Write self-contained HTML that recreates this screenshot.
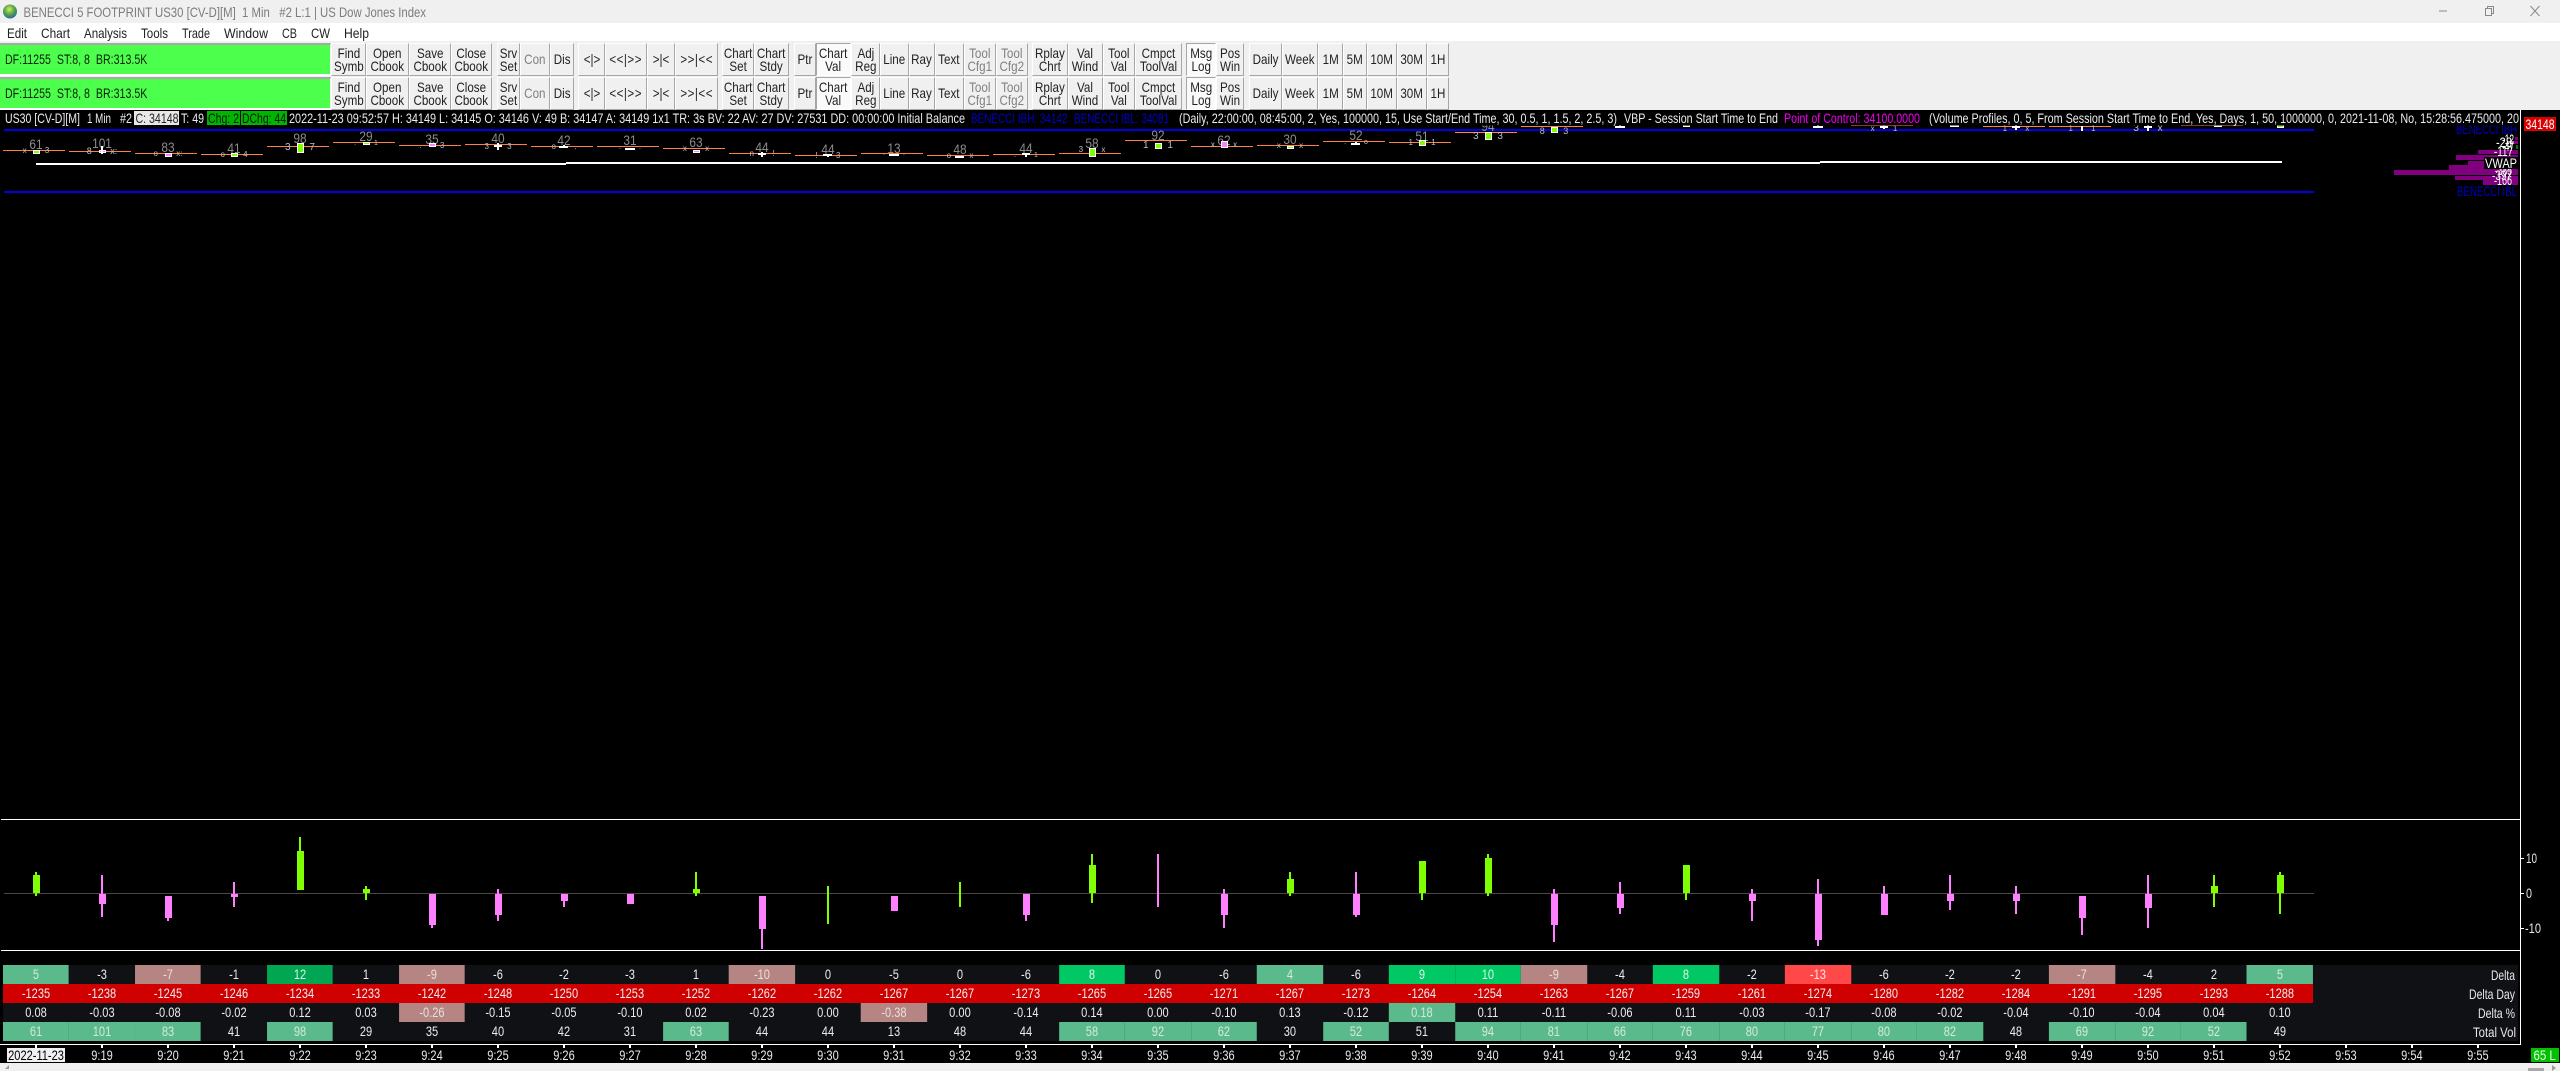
<!DOCTYPE html>
<html><head><meta charset="utf-8"><title>BENECCI 5 FOOTPRINT US30</title>
<style>
html,body{margin:0;padding:0;background:#f0f0f0}
#p{position:relative;width:2560px;height:1071px;overflow:hidden;background:#000;font-family:"Liberation Sans",sans-serif}
.a{position:absolute}
svg{position:absolute;left:0;top:0}
svg text{font-family:"Liberation Sans",sans-serif;font-size:14px;white-space:pre}
.b{position:absolute;height:33px;box-sizing:border-box;display:flex;align-items:center;justify-content:center;text-align:center;background:#f0f0f0;border:1px solid;border-color:#fff #a6a6a6 #a6a6a6 #fff;font-size:14px;line-height:13px;color:#222}
.b i{font-style:normal;display:inline-block;transform:scaleX(.83);white-space:nowrap}
.d{color:#808080}
.k{background:#fafafa;border-color:#a6a6a6 #fff #fff #a6a6a6}
.sp i{letter-spacing:.6px}
.r1{top:43px}.r2{top:77px}
.grid{position:absolute;left:3px;transform:scaleX(.82);transform-origin:0 0;display:grid;font-size:13.5px;color:#ececec;text-align:center}
.t{top:965px;grid-template-columns:repeat(35,80.488px);grid-auto-rows:19px;line-height:19px}
.x{top:1045px;grid-template-columns:repeat(38,80.488px);grid-auto-rows:18px;line-height:21px;color:#e8e8e8}
.grid b{font-weight:normal}
.s{background:#5bba8b;color:#d4e9de}
.h{background:#00a651;color:#dff2e8}
.g{background:#00c864;color:#dff5e8}
.o{background:#b48583;color:#ecdedd}
.n{background:#ff4848;color:#ffe8e8}
.lb{display:flex;align-items:center;justify-content:center;white-space:nowrap}
.lb span{display:inline-block;transform:scaleX(.82)}
</style></head><body><div id="p">
<div class="a" style="left:0;top:0;width:2560px;height:23px;background:#f0f0f0"></div>
<div class="a" style="left:0;top:23px;width:2560px;height:18px;background:#fff"></div>
<div class="a" style="left:0;top:41px;width:2560px;height:69px;background:#f0f0f0"></div>
<div class="a" style="left:0;top:1063px;width:2560px;height:8px;background:#f0f0f0"></div>

<svg width="2560" height="1071" viewBox="0 0 2560 1071">
<defs><radialGradient id="gl" cx=".45" cy=".35" r=".7"><stop offset="0" stop-color="#d8e860"/><stop offset=".5" stop-color="#5aa848"/><stop offset="1" stop-color="#1c5fa8"/></radialGradient></defs>
<circle cx="10" cy="11.5" r="7" fill="url(#gl)"/>
<text x="23.5" y="17" textLength="402.5" lengthAdjust="spacingAndGlyphs" fill="#7c7c7c">BENECCI 5 FOOTPRINT US30 [CV-D][M]  1 Min   #2 L:1 | US Dow Jones Index</text>
<path d="M2439 11h8" stroke="#8a8a8a" fill="none"/>
<path d="M2485.5 8.5h6v7h-6zM2487.5 8.5v-2h6v7h-2" stroke="#8a8a8a" fill="none"/>
<path d="M2530.5 6l9 10M2539.5 6l-9 10" stroke="#8a8a8a" fill="none"/>
<g fill="#222">
<text x="7" y="38" textLength="20" lengthAdjust="spacingAndGlyphs">Edit</text>
<text x="41" y="38" textLength="29" lengthAdjust="spacingAndGlyphs">Chart</text>
<text x="84" y="38" textLength="43" lengthAdjust="spacingAndGlyphs">Analysis</text>
<text x="141" y="38" textLength="27" lengthAdjust="spacingAndGlyphs">Tools</text>
<text x="182" y="38" textLength="28" lengthAdjust="spacingAndGlyphs">Trade</text>
<text x="224" y="38" textLength="44" lengthAdjust="spacingAndGlyphs">Window</text>
<text x="282" y="38" textLength="15" lengthAdjust="spacingAndGlyphs">CB</text>
<text x="311" y="38" textLength="19" lengthAdjust="spacingAndGlyphs">CW</text>
<text x="344" y="38" textLength="25" lengthAdjust="spacingAndGlyphs">Help</text>
</g>

<!-- footprint -->
<g shape-rendering="crispEdges">
<path fill="none" stroke="#ff8040" d="M3 150.5h62M69 151.5h62M135 153.5h62M201 154.5h62M267 146.5h62M333 142.5h62M399 145.5h62M465 144.5h62M531 146.5h62M597 146.5h62M663 148.5h62M729 153.5h62M795 155.5h62M861 153.5h62M927 155.5h62M993 154.5h62M1059 153.5h62M1125 140.5h62M1191 146.5h62M1257 145.5h62M1323 141.5h62M1389 142.5h62M1455 132.5h62M1521 126.5h62M1983 126.5h62M2049 126.5h62M1851 125.5h62M2181 125.5h62"/>
<rect x="4" y="129" width="2310" height="2" fill="#0000e0"/>
<rect x="4" y="191" width="2310" height="2" fill="#0000e0"/>
<rect x="36" y="163" width="530" height="2" fill="#fff"/>
<rect x="566" y="162" width="1254" height="2" fill="#fff"/>
<rect x="1820" y="161" width="462" height="2" fill="#fff"/>
</g>
<g fill="#8c8c8c">
<g text-anchor="middle">
<text transform="translate(36 149) scale(.85 1)">61</text>
<text transform="translate(102 148) scale(.85 1)">101</text>
<text transform="translate(168 152) scale(.85 1)">83</text>
<text transform="translate(234 153) scale(.85 1)">41</text>
<text transform="translate(300 143) scale(.85 1)">98</text>
<text transform="translate(366 141) scale(.85 1)">29</text>
<text transform="translate(432 144) scale(.85 1)">35</text>
<text transform="translate(498 143) scale(.85 1)">40</text>
<text transform="translate(564 145) scale(.85 1)">42</text>
<text transform="translate(630 145) scale(.85 1)">31</text>
<text transform="translate(696 147) scale(.85 1)">63</text>
<text transform="translate(762 152) scale(.85 1)">44</text>
<text transform="translate(828 154) scale(.85 1)">44</text>
<text transform="translate(894 153) scale(.85 1)">13</text>
<text transform="translate(960 154) scale(.85 1)">48</text>
<text transform="translate(1026 153) scale(.85 1)">44</text>
<text transform="translate(1092 148) scale(.85 1)">58</text>
<text transform="translate(1158 140) scale(.85 1)">92</text>
<text transform="translate(1224 145) scale(.85 1)">62</text>
<text transform="translate(1290 144) scale(.85 1)">30</text>
<text transform="translate(1356 140) scale(.85 1)">52</text>
<text transform="translate(1422 141) scale(.85 1)">51</text>
<text transform="translate(1488 131) scale(.85 1)">94</text>
</g></g>
<g fill="#b8c0cc" text-anchor="middle" style="word-spacing:16px">
<text style="font-size:8px" x="36" y="153">x 3</text>
<text style="font-size:9px" x="102" y="154">8 x:</text>
<text style="font-size:8px" x="168" y="156">o x:</text>
<text style="font-size:8px" x="234" y="157">o 4</text>
<text style="font-size:10px" x="300" y="150">3 7</text>
<text style="font-size:7px" x="366" y="145">. 1</text>
<text style="font-size:8px" x="432" y="148">. 3</text>
<text style="font-size:8px" x="498" y="149">3 3</text>
<text style="font-size:8px" x="564" y="149">o .</text>
<text style="font-size:7px" x="630" y="149">. .</text>
<text style="font-size:8px" x="696" y="151">x x</text>
<text style="font-size:8px" x="762" y="156">n !</text>
<text style="font-size:8px" x="828" y="158">! 3</text>
<text style="font-size:7px" x="894" y="155">. .</text>
<text style="font-size:8px" x="960" y="158">o x</text>
<text style="font-size:7px" x="1026" y="157">. 1</text>
<text style="font-size:8px" x="1092" y="152">3 x</text>
<text style="font-size:10px" x="1158" y="148">1 1</text>
<text style="font-size:8px" x="1224" y="147">x x</text>
<text style="font-size:8px" x="1290" y="148">x x</text>
<text style="font-size:7px" x="1356" y="144">. o</text>
<text style="font-size:8px" x="1422" y="145">1 1</text>
<text style="font-size:10px" x="1488" y="139">3 3</text>
<text style="font-size:9px" x="1554" y="134">8 3</text>
<text style="font-size:8px" x="1884" y="131">x 1</text>
<text style="font-size:8px" x="2016" y="131">1 x</text>
<text style="font-size:8px" x="2082" y="131">1 1</text>
<text style="font-size:10px" x="2148" y="131">3 x</text>
</g>
<g shape-rendering="crispEdges" stroke="#fff" stroke-width="1">
<g fill="#80ff00">
<rect x="33.5" y="150.5" width="6" height="3"/><rect x="231.5" y="153.5" width="6" height="3"/><rect x="297.5" y="143.5" width="6" height="9"/><rect x="363.5" y="142.5" width="6" height="2"/><rect x="1089.5" y="148.5" width="6" height="8"/><rect x="1155.5" y="143.5" width="6" height="5"/><rect x="1287.5" y="146.5" width="6" height="2"/><rect x="1419.5" y="140.5" width="6" height="5"/><rect x="1485.5" y="132.5" width="6" height="7"/><rect x="1551.5" y="127.5" width="6" height="5"/><rect x="1683.5" y="124.5" width="6" height="2"/><rect x="2277.5" y="124.5" width="6" height="3"/>
</g>
<g fill="#ff80ff">
<rect x="99.5" y="150.5" width="6" height="2"/><rect x="165.5" y="153.5" width="6" height="3"/><rect x="429.5" y="143.5" width="6" height="3"/><rect x="693.5" y="150.5" width="6" height="2"/><rect x="1221.5" y="141.5" width="6" height="6"/>
</g>
</g>
<path shape-rendering="crispEdges" fill="none" stroke="#fff" stroke-width="2" d="M102 146v8M498 143v7M494 146h8M564 145v3M559 147h9M625 149h10M762 152v5M758 154h8M828 154v3M823 155h9M889 155h10M955 157h9M1026 153v4M1022 154h8M1356 142v3M1351 144h9M1620 125v2M1615 127h10M1818 125v2M1813 127h10M1884 125v4M1880 127h8M1950 126h9M2016 125v5M2012 127h8M2082 126v5M2148 125v6M2144 127h8M2214 126h8"/>

<!-- profile -->
<g fill="#800080" shape-rendering="crispEdges">
<rect x="2515" y="137" width="3" height="3"/><rect x="2511" y="141" width="7" height="3"/><rect x="2478" y="150" width="40" height="4"/><rect x="2456" y="155" width="62" height="5"/><rect x="2468" y="161" width="50" height="4"/><rect x="2449" y="165" width="69" height="5"/><rect x="2394" y="170" width="124" height="5"/><rect x="2455" y="176" width="63" height="4"/><rect x="2483" y="180" width="35" height="5"/>
</g>
<rect x="2516" y="145" width="2" height="4" fill="#008000"/>
<g fill="#fff" text-anchor="end" style="font-size:12px">
<text x="2514" y="144" textLength="12" lengthAdjust="spacingAndGlyphs">-12</text>
<text x="2512" y="147" textLength="16" lengthAdjust="spacingAndGlyphs">-28</text>
<text x="2514" y="151" textLength="12" lengthAdjust="spacingAndGlyphs">-47</text>
<text x="2513" y="156" textLength="19" lengthAdjust="spacingAndGlyphs">-117</text>
<text x="2512" y="175" textLength="17" lengthAdjust="spacingAndGlyphs">-385</text>
<text x="2512" y="180" textLength="20" lengthAdjust="spacingAndGlyphs">-397</text>
<text x="2512" y="185" textLength="18" lengthAdjust="spacingAndGlyphs">-166</text>
</g>
<rect x="2484" y="157" width="34" height="12" fill="#000"/>
<text x="2485" y="168" textLength="32" lengthAdjust="spacingAndGlyphs" fill="#fff">VWAP</text>
<text x="2456" y="134" textLength="61" lengthAdjust="spacingAndGlyphs" fill="#0000c0">BENECCI IBH</text>
<text x="2457" y="196" textLength="60" lengthAdjust="spacingAndGlyphs" fill="#0000c0">BENECCI IBL</text>

<!-- status -->
<rect x="0" y="110" width="2520" height="15.5" fill="#000"/>
<rect x="134" y="111" width="45" height="14" fill="#e8e8e8"/>
<rect x="207" y="111" width="33" height="14" fill="#00b400"/>
<rect x="241" y="111" width="46" height="14" fill="#00b400"/>
<g fill="#ececec">
<text x="5" y="123" textLength="75" lengthAdjust="spacingAndGlyphs">US30 [CV-D][M]</text>
<text x="87" y="123" textLength="24" lengthAdjust="spacingAndGlyphs">1 Min</text>
<text x="120" y="123" textLength="12" lengthAdjust="spacingAndGlyphs">#2</text>
<text x="181" y="123" textLength="23" lengthAdjust="spacingAndGlyphs">T: 49</text>
<text x="289" y="123" textLength="676" lengthAdjust="spacingAndGlyphs">2022-11-23 09:52:57 H: 34149 L: 34145 O: 34146 V: 49 B: 34147 A: 34149 1x1 TR: 3s BV: 22 AV: 27 DV: 27531 DD: 00:00:00 Initial Balance</text>
<text x="1179" y="123" textLength="438" lengthAdjust="spacingAndGlyphs">(Daily, 22:00:00, 08:45:00, 2, Yes, 100000, 15, Use Start/End Time, 30, 0.5, 1, 1.5, 2, 2.5, 3)</text>
<text x="1624" y="123" textLength="154" lengthAdjust="spacingAndGlyphs">VBP - Session Start Time to End</text>
<text x="1929" y="123" textLength="590" lengthAdjust="spacingAndGlyphs">(Volume Profiles, 0, 5, From Session Start Time to End, Yes, Days, 1, 50, 1000000, 0, 2021-11-08, No, 15:28:56.475000, 20</text>
</g>
<text x="135.5" y="123" textLength="43" lengthAdjust="spacingAndGlyphs" fill="#222">C: 34148</text>
<text x="208" y="123" textLength="31" lengthAdjust="spacingAndGlyphs" fill="#0a1a0a">Chg: 2</text>
<text x="242" y="123" textLength="44" lengthAdjust="spacingAndGlyphs" fill="#0a1a0a">DChg: 44</text>
<text x="971" y="123" textLength="96.5" lengthAdjust="spacingAndGlyphs" fill="#0000c8">BENECCI IBH: 34142</text>
<text x="1074" y="123" textLength="95" lengthAdjust="spacingAndGlyphs" fill="#0000c8">BENECCI IBL: 34081</text>
<text x="1784" y="123" textLength="136" lengthAdjust="spacingAndGlyphs" fill="#f000f0">Point of Control: 34100.0000</text>

<!-- frame lines -->
<g fill="#fff" shape-rendering="crispEdges">
<rect x="2520" y="110" width="1" height="935"/>
<rect x="1" y="819" width="2519" height="1"/>
<rect x="1" y="950" width="2519" height="1"/>
<rect x="0" y="1044" width="2521" height="1"/>
<rect x="2521" y="858" width="3" height="1"/><rect x="2521" y="893" width="3" height="1"/><rect x="2521" y="928" width="3" height="1"/>
</g>
<rect x="2524" y="117" width="32" height="14" fill="#d80000"/>
<text x="2525.5" y="129" textLength="29" lengthAdjust="spacingAndGlyphs" fill="#fff">34148</text>
<g fill="#e8e8e8">
<text x="2526" y="863" textLength="11" lengthAdjust="spacingAndGlyphs">10</text>
<text x="2526" y="898" textLength="6" lengthAdjust="spacingAndGlyphs">0</text>
<text x="2525" y="933" textLength="16" lengthAdjust="spacingAndGlyphs">-10</text>
</g>

<!-- delta pane -->
<rect x="4" y="893" width="2310" height="1" fill="#484848" shape-rendering="crispEdges"/>
<g fill="none" shape-rendering="crispEdges">
<path stroke="#80ff00" stroke-width="2" d="M36 872V896M300 837V890M366 886V900M696 872V896M828 886V924M960 882V907M1092 854V903M1290 872V896M1422 893V900M1488 854V896M1686 893V900M2214 875V907M2280 872V914"/>
<path stroke="#80ff00" stroke-width="7" d="M36.5 875V893M300.5 851V890M366.5 889V893M696.5 889V893M1092.5 865V893M1290.5 879V893M1422.5 861V893M1488.5 858V893M1686.5 865V893M2214.5 886V893M2280.5 875V893"/>
<path stroke="#ff80ff" stroke-width="2" d="M102 875V917M168 918V921M234 882V907M432 925V928M498 889V921M564 901V907M762 929V949M1026 915V921M1158 854V907M1224 889V928M1356 872V917M1554 889V942M1620 882V914M1752 889V921M1818 879V946M1884 886V894M1950 875V910M2016 886V914M2082 918V935M2148 875V928"/>
<path stroke="#ff80ff" stroke-width="7" d="M102.5 894V904M168.5 896V918M234.5 894V897M432.5 894V925M498.5 894V915M564.5 894V901M630.5 894V904M762.5 896V929M894.5 896V911M1026.5 894V915M1224.5 894V915M1356.5 894V915M1554.5 894V925M1620.5 894V908M1752.5 894V901M1818.5 894V940M1884.5 894V915M1950.5 894V901M2016.5 894V901M2082.5 896V918M2148.5 894V908"/>
</g>

<!-- table bg -->
<rect x="3" y="965" width="2515" height="76" fill="#0f1114"/>
<rect x="3" y="984" width="2310" height="19" fill="#d00000"/>
<g fill="#e8e8e8">
<text x="2491" y="980" textLength="24" lengthAdjust="spacingAndGlyphs">Delta</text>
<text x="2469" y="999" textLength="46" lengthAdjust="spacingAndGlyphs">Delta Day</text>
<text x="2478" y="1018" textLength="37" lengthAdjust="spacingAndGlyphs">Delta %</text>
<text x="2473" y="1037" textLength="43" lengthAdjust="spacingAndGlyphs">Total Vol</text>
</g>
<path d="M9 1065l-4 4h4z" fill="#9a9a9a"/>
<path d="M2552 1065l4 3-4 3z" fill="#9a9a9a"/>
<rect x="2528" y="1068" width="16" height="3" fill="#a8a8a8"/>
</svg>

<div class="grid t">
<b class="s">5</b><b>-3</b><b class="o">-7</b><b>-1</b><b class="h">12</b><b>1</b><b class="o">-9</b><b>-6</b><b>-2</b><b>-3</b><b>1</b><b class="o">-10</b><b>0</b><b>-5</b><b>0</b><b>-6</b><b class="g">8</b><b>0</b><b>-6</b><b class="s">4</b><b>-6</b><b class="g">9</b><b class="g">10</b><b class="o">-9</b><b>-4</b><b class="g">8</b><b>-2</b><b class="n">-13</b><b>-6</b><b>-2</b><b>-2</b><b class="o">-7</b><b>-4</b><b>2</b><b class="s">5</b>
<b>-1235</b><b>-1238</b><b>-1245</b><b>-1246</b><b>-1234</b><b>-1233</b><b>-1242</b><b>-1248</b><b>-1250</b><b>-1253</b><b>-1252</b><b>-1262</b><b>-1262</b><b>-1267</b><b>-1267</b><b>-1273</b><b>-1265</b><b>-1265</b><b>-1271</b><b>-1267</b><b>-1273</b><b>-1264</b><b>-1254</b><b>-1263</b><b>-1267</b><b>-1259</b><b>-1261</b><b>-1274</b><b>-1280</b><b>-1282</b><b>-1284</b><b>-1291</b><b>-1295</b><b>-1293</b><b>-1288</b>
<b>0.08</b><b>-0.03</b><b>-0.08</b><b>-0.02</b><b>0.12</b><b>0.03</b><b class="o">-0.26</b><b>-0.15</b><b>-0.05</b><b>-0.10</b><b>0.02</b><b>-0.23</b><b>0.00</b><b class="o">-0.38</b><b>0.00</b><b>-0.14</b><b>0.14</b><b>0.00</b><b>-0.10</b><b>0.13</b><b>-0.12</b><b class="s">0.18</b><b>0.11</b><b>-0.11</b><b>-0.06</b><b>0.11</b><b>-0.03</b><b>-0.17</b><b>-0.08</b><b>-0.02</b><b>-0.04</b><b>-0.10</b><b>-0.04</b><b>0.04</b><b>0.10</b>
<b class="s">61</b><b class="s">101</b><b class="s">83</b><b>41</b><b class="s">98</b><b>29</b><b>35</b><b>40</b><b>42</b><b>31</b><b class="s">63</b><b>44</b><b>44</b><b>13</b><b>48</b><b>44</b><b class="s">58</b><b class="s">92</b><b class="s">62</b><b>30</b><b class="s">52</b><b>51</b><b class="s">94</b><b class="s">81</b><b class="s">66</b><b class="s">76</b><b class="s">80</b><b class="s">77</b><b class="s">80</b><b class="s">82</b><b>48</b><b class="s">69</b><b class="s">92</b><b class="s">52</b><b>49</b>
</div>

<div class="a" style="left:35px;top:1045px;width:2446px;height:3px;background:repeating-linear-gradient(90deg,#fff 0 2px,transparent 2px 66px)"></div>
<div class="grid x">
<b></b><b>9:19</b><b>9:20</b><b>9:21</b><b>9:22</b><b>9:23</b><b>9:24</b><b>9:25</b><b>9:26</b><b>9:27</b><b>9:28</b><b>9:29</b><b>9:30</b><b>9:31</b><b>9:32</b><b>9:33</b><b>9:34</b><b>9:35</b><b>9:36</b><b>9:37</b><b>9:38</b><b>9:39</b><b>9:40</b><b>9:41</b><b>9:42</b><b>9:43</b><b>9:44</b><b>9:45</b><b>9:46</b><b>9:47</b><b>9:48</b><b>9:49</b><b>9:50</b><b>9:51</b><b>9:52</b><b>9:53</b><b>9:54</b><b>9:55</b>
</div>
<div class="a lb" style="left:7px;top:1048px;width:58px;height:14px;background:#f0f0f0;color:#000;font-size:13.5px"><span>2022-11-23</span></div>
<div class="a lb" style="left:2531px;top:1048px;width:28px;height:14px;background:#00c000;color:#eaffea;font-size:14px"><span>65 L</span></div>

<!-- green panels -->
<div class="a" style="left:0;top:43px;width:331px;height:33px;box-sizing:border-box;border:2px solid #a8a8a8;border-right:1px solid #f0f0f0;border-left:0;border-bottom:2px solid #fff;background:#4dff4d"></div>
<div class="a" style="left:0;top:77px;width:331px;height:33px;box-sizing:border-box;border:2px solid #a8a8a8;border-right:1px solid #f0f0f0;border-left:0;border-bottom:2px solid #fff;background:#4dff4d"></div>
<div class="a" style="left:5px;top:52px;font-size:14px;line-height:15px;white-space:pre;color:#082008"><span style="display:inline-block;transform:scaleX(.76);transform-origin:0 0">DF:11255  ST:8, 8  BR:313.5K</span></div>
<div class="a" style="left:5px;top:86px;font-size:14px;line-height:15px;white-space:pre;color:#082008"><span style="display:inline-block;transform:scaleX(.76);transform-origin:0 0">DF:11255  ST:8, 8  BR:313.5K</span></div>

<!-- toolbar row 1 -->
<div class="b r1" style="left:331px;width:35px"><i>Find<br>Symb</i></div>
<div class="b r1" style="left:366px;width:43px"><i>Open<br>Cbook</i></div>
<div class="b r1" style="left:409px;width:42px"><i>Save<br>Cbook</i></div>
<div class="b r1" style="left:451px;width:41px"><i>Close<br>Cbook</i></div>
<div class="b r1" style="left:497px;width:23px"><i>Srv<br>Set</i></div>
<div class="b r1 d" style="left:520px;width:30px"><i>Con</i></div>
<div class="b r1" style="left:550px;width:24px"><i>Dis</i></div>
<div class="b r1" style="left:578px;width:27px"><i>&lt;|&gt;</i></div>
<div class="b r1 sp" style="left:605px;width:42px"><i>&lt;&lt;|&gt;&gt;</i></div>
<div class="b r1" style="left:647px;width:27.5px"><i>&gt;|&lt;</i></div>
<div class="b r1 sp" style="left:674.5px;width:43.5px"><i>&gt;&gt;|&lt;&lt;</i></div>
<div class="b r1" style="left:722px;width:31.5px"><i>Chart<br>Set</i></div>
<div class="b r1" style="left:753.5px;width:35.5px"><i>Chart<br>Stdy</i></div>
<div class="b r1" style="left:794px;width:21.5px"><i>Ptr</i></div>
<div class="b r1 k" style="left:815.5px;width:35.5px"><i>Chart<br>Val</i></div>
<div class="b r1" style="left:851px;width:29px"><i>Adj<br>Reg</i></div>
<div class="b r1" style="left:880px;width:29px"><i>Line</i></div>
<div class="b r1" style="left:909px;width:25.5px"><i>Ray</i></div>
<div class="b r1" style="left:934.5px;width:29.5px"><i>Text</i></div>
<div class="b r1 d" style="left:964px;width:32px"><i>Tool<br>Cfg1</i></div>
<div class="b r1 d" style="left:996px;width:32px"><i>Tool<br>Cfg2</i></div>
<div class="b r1" style="left:1032px;width:35.5px"><i>Rplay<br>Chrt</i></div>
<div class="b r1" style="left:1067.5px;width:35.5px"><i>Val<br>Wind</i></div>
<div class="b r1" style="left:1103px;width:31.5px"><i>Tool<br>Val</i></div>
<div class="b r1" style="left:1134.5px;width:47px"><i>Cmpct<br>ToolVal</i></div>
<div class="b r1 k" style="left:1186px;width:30px"><i>Msg<br>Log</i></div>
<div class="b r1" style="left:1216px;width:28px"><i>Pos<br>Win</i></div>
<div class="b r1" style="left:1249px;width:33px"><i>Daily</i></div>
<div class="b r1" style="left:1282px;width:36px"><i>Week</i></div>
<div class="b r1" style="left:1318px;width:24.5px"><i>1M</i></div>
<div class="b r1" style="left:1342.5px;width:24px"><i>5M</i></div>
<div class="b r1" style="left:1366.5px;width:30.5px"><i>10M</i></div>
<div class="b r1" style="left:1397px;width:30px"><i>30M</i></div>
<div class="b r1" style="left:1427px;width:21.5px"><i>1H</i></div>

<!-- toolbar row 2 -->
<div class="b r2" style="left:331px;width:35px"><i>Find<br>Symb</i></div>
<div class="b r2" style="left:366px;width:43px"><i>Open<br>Cbook</i></div>
<div class="b r2" style="left:409px;width:42px"><i>Save<br>Cbook</i></div>
<div class="b r2" style="left:451px;width:41px"><i>Close<br>Cbook</i></div>
<div class="b r2" style="left:497px;width:23px"><i>Srv<br>Set</i></div>
<div class="b r2 d" style="left:520px;width:30px"><i>Con</i></div>
<div class="b r2" style="left:550px;width:24px"><i>Dis</i></div>
<div class="b r2" style="left:578px;width:27px"><i>&lt;|&gt;</i></div>
<div class="b r2 sp" style="left:605px;width:42px"><i>&lt;&lt;|&gt;&gt;</i></div>
<div class="b r2" style="left:647px;width:27.5px"><i>&gt;|&lt;</i></div>
<div class="b r2 sp" style="left:674.5px;width:43.5px"><i>&gt;&gt;|&lt;&lt;</i></div>
<div class="b r2" style="left:722px;width:31.5px"><i>Chart<br>Set</i></div>
<div class="b r2" style="left:753.5px;width:35.5px"><i>Chart<br>Stdy</i></div>
<div class="b r2" style="left:794px;width:21.5px"><i>Ptr</i></div>
<div class="b r2 k" style="left:815.5px;width:35.5px"><i>Chart<br>Val</i></div>
<div class="b r2" style="left:851px;width:29px"><i>Adj<br>Reg</i></div>
<div class="b r2" style="left:880px;width:29px"><i>Line</i></div>
<div class="b r2" style="left:909px;width:25.5px"><i>Ray</i></div>
<div class="b r2" style="left:934.5px;width:29.5px"><i>Text</i></div>
<div class="b r2 d" style="left:964px;width:32px"><i>Tool<br>Cfg1</i></div>
<div class="b r2 d" style="left:996px;width:32px"><i>Tool<br>Cfg2</i></div>
<div class="b r2" style="left:1032px;width:35.5px"><i>Rplay<br>Chrt</i></div>
<div class="b r2" style="left:1067.5px;width:35.5px"><i>Val<br>Wind</i></div>
<div class="b r2" style="left:1103px;width:31.5px"><i>Tool<br>Val</i></div>
<div class="b r2" style="left:1134.5px;width:47px"><i>Cmpct<br>ToolVal</i></div>
<div class="b r2 k" style="left:1186px;width:30px"><i>Msg<br>Log</i></div>
<div class="b r2" style="left:1216px;width:28px"><i>Pos<br>Win</i></div>
<div class="b r2" style="left:1249px;width:33px"><i>Daily</i></div>
<div class="b r2" style="left:1282px;width:36px"><i>Week</i></div>
<div class="b r2" style="left:1318px;width:24.5px"><i>1M</i></div>
<div class="b r2" style="left:1342.5px;width:24px"><i>5M</i></div>
<div class="b r2" style="left:1366.5px;width:30.5px"><i>10M</i></div>
<div class="b r2" style="left:1397px;width:30px"><i>30M</i></div>
<div class="b r2" style="left:1427px;width:21.5px"><i>1H</i></div>
</div></body></html>
